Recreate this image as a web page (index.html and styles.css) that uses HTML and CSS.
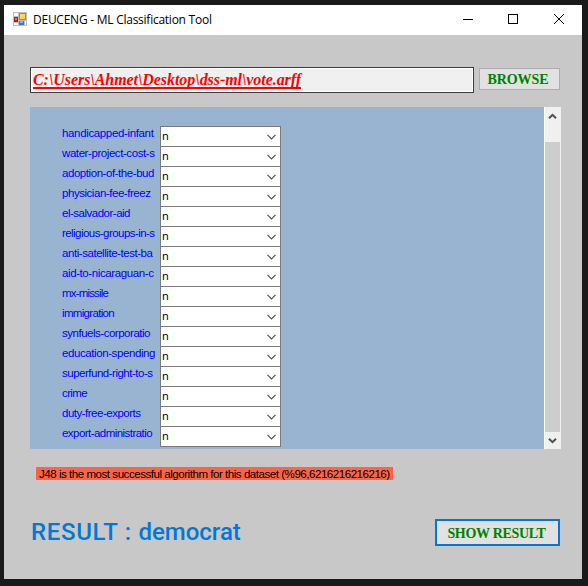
FILE: index.html
```html
<!DOCTYPE html>
<html lang="en">
<head>
<meta charset="utf-8">
<title>DEUCENG - ML Classification Tool</title>
<link rel="stylesheet" href="styles.css">
</head>
<body>
<div class="window">
  <header class="titlebar">
    <svg class="app-icon" width="14" height="14" viewBox="0 0 14 14" shape-rendering="crispEdges">
      <rect width="14" height="14" fill="#bdbdbd"/>
      <path d="M1 1h4v3H1zM1 11h4v2H1zM12 9h1v4h-1z" fill="#fff"/>
      <rect x="6" y="1" width="7" height="7" fill="#b98a1d"/>
      <rect x="7" y="2" width="5" height="5" fill="#ffd75c"/>
      <rect x="1" y="5" width="4" height="5" fill="#b3201c"/>
      <rect x="2" y="6" width="2" height="2" fill="#e87068"/>
      <rect x="6" y="9" width="5" height="4" fill="#3e73d6"/>
      <rect x="7" y="9" width="3" height="2" fill="#82b0ff"/>
    </svg>
    <span class="title">DEUCENG - ML Classification Tool</span>
    <svg class="controls" width="104" height="12" viewBox="0 0 104 12" fill="none" stroke="#000">
      <path d="M0 6.5h10M45.500 1.500h9v9h-9z" shape-rendering="crispEdges"/>
      <path d="M91 1l10 10M101 1l-10 10"/>
    </svg>
  </header>
  <main class="client">
    <div class="file-row">
      <div class="path"><span class="path-text">C:\Users\Ahmet\Desktop\dss-ml\vote.arff</span></div>
      <button class="browse">BROWSE</button>
    </div>
    <section class="panel">
      <div class="fields" id="fields"></div>
      <div class="scrollbar">
        <svg class="arrow" width="9" height="7" viewBox="0 0 9 7"><path d="M1 5.300L4.500 1.800L8 5.300" fill="none" stroke="#505050" stroke-width="2"/></svg>
        <div class="thumb"></div>
        <svg class="arrow" width="9" height="7" viewBox="0 0 9 7"><path d="M1 1.700L4.500 5.200L8 1.700" fill="none" stroke="#505050" stroke-width="2"/></svg>
      </div>
    </section>
    <div class="info"><span class="info-text">J48 is the most successful algorithm for this dataset (%96,6216216216216)</span></div>
    <footer class="bottom">
      <div class="result">RESULT : <span class="value">democrat</span></div>
      <button class="show">SHOW RESULT</button>
    </footer>
  </main>
</div>
<script src="fields.js"></script>
</body>
</html>
```
FILE: fields.js
```js
// Attribute name and the width its label takes up, in pixels
const attributes = [
  ["handicapped-infant", 91.5], ["water-project-cost-s", 92.5],
  ["adoption-of-the-bud", 92], ["physician-fee-freez", 88.5],
  ["el-salvador-aid", 68], ["religious-groups-in-s", 92.5],
  ["anti-satellite-test-ba", 90.5], ["aid-to-nicaraguan-c", 91.5],
  ["mx-missile", 46], ["immigration", 52],
  ["synfuels-corporatio", 88], ["education-spending", 93],
  ["superfund-right-to-s", 90.5], ["crime", 25],
  ["duty-free-exports", 78.5], ["export-administratio", 90]
];
const fields = document.getElementById("fields");
for (const [name, width] of attributes) {
  const row = document.createElement("div");
  row.className = "field";
  row.innerHTML = `<span class="label"><span class="name">${name}</span></span>
    <div class="combo"><span>n</span><svg width="9" height="6" viewBox="0 0 9 6"><path d="M.5 .8L4.500 4.800L8.500 .8" fill="none" stroke="#505050" stroke-width="1.200"/></svg></div>`;
  fields.append(row);
  const text = row.querySelector(".name");
  const natural = text.getBoundingClientRect().width;
  text.style.letterSpacing = (width - natural) / name.length + "px";
}
```
FILE: styles.css
```css
* { box-sizing: border-box; }
body {
  margin: 0;
  width: 588px;
  height: 586px;
  padding: 5px 6px 7px 4px;
  background: #1a1a1a;
  overflow: hidden;
  font-family: "Liberation Sans", sans-serif;
}
.window { width: 578px; height: 574px; background: #c8c8c8; }
.titlebar {
  display: flex;
  align-items: center;
  height: 30px;
  padding: 0 15px 0 9px;
  background: #fff;
}
.app-icon { margin-top: -2px; }
.title {
  margin-left: 6px;
  font: 12px/16px "Open Sans", sans-serif;
  letter-spacing: -0.25px;
  color: #000;
  white-space: nowrap;
}
.controls { margin-left: auto; margin-top: -2px; }
.client { padding: 32px 21px 0 26px; }
.file-row { display: flex; gap: 5px; align-items: flex-start; }
.path {
  width: 444px;
  height: 26px;
  padding: 0 2px;
  border: 1px solid #3c3c3c;
  box-shadow: inset 0 0 0 1px #fff;
  background: #f0f0f0;
}
.path-text {
  display: inline-block;
  height: 21px;
  border-bottom: 2px solid #f00;
  color: #f00;
  font: italic bold 16px/23px "Liberation Serif", serif;
  letter-spacing: -0.06px;
  white-space: nowrap;
}
button {
  padding: 0;
  background: #e1e1e1;
  color: #008000;
  font: bold 14px/18px "Liberation Serif", serif;
  white-space: nowrap;
}
.browse { width: 81px; height: 22px; margin-top: 1px; padding: 2px 3px 0 0; letter-spacing: -0.1px; border: 1px solid #adadad; }
.panel {
  display: flex;
  justify-content: space-between;
  width: 531px;
  height: 342px;
  margin-top: 14px;
  background: #99b4d1;
}
.fields { padding: 19px 0 0 32px; }
.field { display: flex; height: 20px; }
.label {
  width: 98px;
  font-size: 11.5px;
  line-height: 14px;
  color: #00f;
  white-space: nowrap;
}
.combo {
  display: flex;
  align-items: center;
  justify-content: space-between;
  width: 121px;
  height: 21px;
  padding: 0 4px 1px 1px;
  border: 1px solid #7a7a7a;
  background: #fff;
  font: 11px/16px "Noto Sans", sans-serif;
  color: #000;
}
.combo svg { margin-top: 1px; }
.scrollbar {
  display: flex;
  flex-direction: column;
  align-items: center;
  justify-content: space-between;
  width: 17px;
  padding: 6px 1px 5px 0;
  background: #f0f0f0;
  border-left: 1px solid #fff;
}
.thumb { width: 15px; height: 290px; margin-top: 17px; background: #cdcdcd; }
.info { height: 13px; margin: 18px 0 0 6px; }
.info-text {
  display: block;
  width: 357px;
  height: 13px;
  padding-left: 3px;
  background: #ff6347;
  color: #000;
  font-size: 11.5px;
  line-height: 14px;
  letter-spacing: -0.45px;
  white-space: nowrap;
}
.bottom { display: flex; justify-content: space-between; margin-top: 39px; }
.result {
  padding-left: 1px;
  color: #0078d7;
  font: 500 24px/27px Roboto, sans-serif;
  letter-spacing: 0.68px;
  white-space: nowrap;
}
.value { letter-spacing: 0; }
.show { width: 125px; height: 27px; margin-right: 1px; padding: 2px 2px 0 0; letter-spacing: -0.3px; border: 2px solid #0078d7; }
```
